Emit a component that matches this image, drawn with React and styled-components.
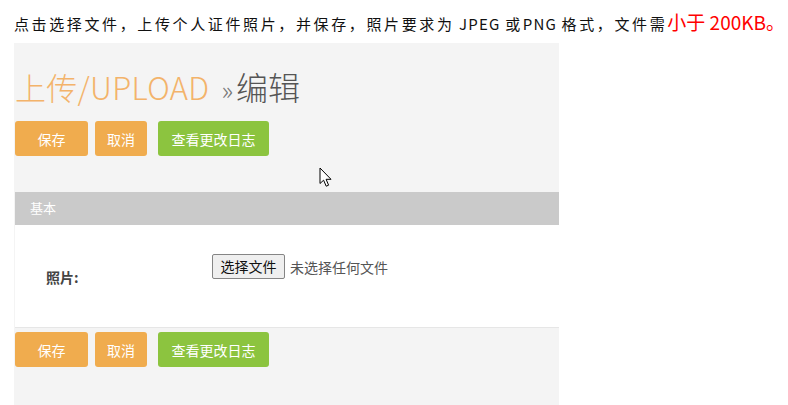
import React from "react";
import styled, { createGlobalStyle } from "styled-components";

const Global = createGlobalStyle`
  html, body { margin: 0; padding: 0; background: #fff; }
  body { font-family: "Noto Sans CJK SC", "Noto Sans", sans-serif; }
`;

const Page = styled.div`
  position: relative;
  width: 788px;
  height: 405px;
  overflow: hidden;
`;

const Intro = styled.p`
  margin: 0;
  padding: 10px 0 0 14px;
  height: 43px;
  box-sizing: border-box;
  font-size: 15px;
  line-height: 24px;
  letter-spacing: 2.62px;
  color: #111;
  white-space: nowrap;
`;

const Latin = styled.span`
  letter-spacing: 1.2px;
`;

const Red = styled.span`
  color: #ff0000;
  font-size: 19px;
  letter-spacing: 0;
`;

const Panel = styled.div`
  margin-left: 14px;
  width: 545px;
  padding-left: 1px;
  box-sizing: border-box;
  height: 362px;
  background: #f4f4f4;
`;

const Title = styled.h1`
  margin: 0;
  padding-top: 22px;
  height: 78px;
  box-sizing: border-box;
  font-size: 31px;
  line-height: 42px;
  font-weight: 300;
  color: #555;
  white-space: nowrap;
`;

const Crumb = styled.span`
  color: #f3b36a;
  letter-spacing: 0.3px;
`;

const Sep = styled.span`
  color: #777;
  margin: 0 3px 0 12px;
  font-size: 26px;
`;

const Current = styled.span`
  font-size: 32px;
`;

const ButtonRow = styled.div`
  display: flex;
  height: ${(p) => p.$h}px;
  align-items: flex-start;
`;

const Btn = styled.button`
  width: ${(p) => p.$w}px;
  height: 35px;
  margin-right: ${(p) => p.$mr || 0}px;
  border: none;
  border-radius: 3px;
  background: ${(p) => (p.$green ? "#8cc43f" : "#f0ac4e")};
  color: #fff;
  font-family: inherit;
  font-size: 14px;
  padding: 0;
  cursor: pointer;
`;

const SectionHead = styled.div`
  height: 33px;
  background: #cacaca;
  color: #fff;
  font-size: 13px;
  line-height: 31px;
  padding-left: 15px;
`;

const SectionBody = styled.div`
  height: 102px;
  background: #fff;
  border-bottom: 1px solid #e6e6e6;
  display: grid;
  grid-template-columns: 197px 1fr;
  align-items: start;
  margin-bottom: 4px;
`;

const Label = styled.label`
  padding: 40px 0 0 31px;
  font-size: 14px;
  font-weight: 700;
  color: #444;
  line-height: 24px;
`;

const FileField = styled.div`
  padding-top: 29px;
  display: flex;
  align-items: center;
  gap: 5px;
`;

const FileBtn = styled.span`
  display: inline-block;
  width: 73px;
  height: 25px;
  box-sizing: border-box;
  border: 1px solid #858585;
  border-radius: 2px;
  background: #efefef;
  color: #111;
  font-size: 14px;
  line-height: 22px;
  text-align: center;
`;

const FileName = styled.span`
  font-size: 14px;
  color: #555;
`;

const Cursor = styled.svg`
  position: absolute;
  left: 319px;
  top: 167px;
`;

const Actions = ({ h }) => (
  <ButtonRow $h={h}>
    <Btn $w={73} $mr={7}>保存</Btn>
    <Btn $w={52} $mr={11}>取消</Btn>
    <Btn $w={111} $green>查看更改日志</Btn>
  </ButtonRow>
);

export default function App() {
  return (
    <Page>
      <Global />
      <Intro>
        点击选择文件，上传个人证件照片，并保存，照片要求为<Latin> JPEG </Latin>或<Latin>PNG </Latin>格式，文件需
        <Red>小于 200KB。</Red>
      </Intro>
      <Panel>
        <Title>
          <Crumb>上传/UPLOAD</Crumb>
          <Sep>»</Sep>
          <Current>编辑</Current>
        </Title>
        <Actions h={71} />
        <SectionHead>基本</SectionHead>
        <SectionBody>
          <Label>照片:</Label>
          <FileField>
            <FileBtn>选择文件</FileBtn>
            <FileName>未选择任何文件</FileName>
          </FileField>
        </SectionBody>
        <Actions h={35} />
      </Panel>
      <Cursor width="14" height="22" viewBox="0 0 14 22">
        <path
          d="M1 1 L1 16.5 L4.6 13.2 L7.2 19.2 L9.6 18.2 L7.1 12.3 L12 12.3 Z"
          fill="#fff"
          stroke="#000"
          strokeWidth="1"
          strokeLinejoin="round"
        />
      </Cursor>
    </Page>
  );
}
